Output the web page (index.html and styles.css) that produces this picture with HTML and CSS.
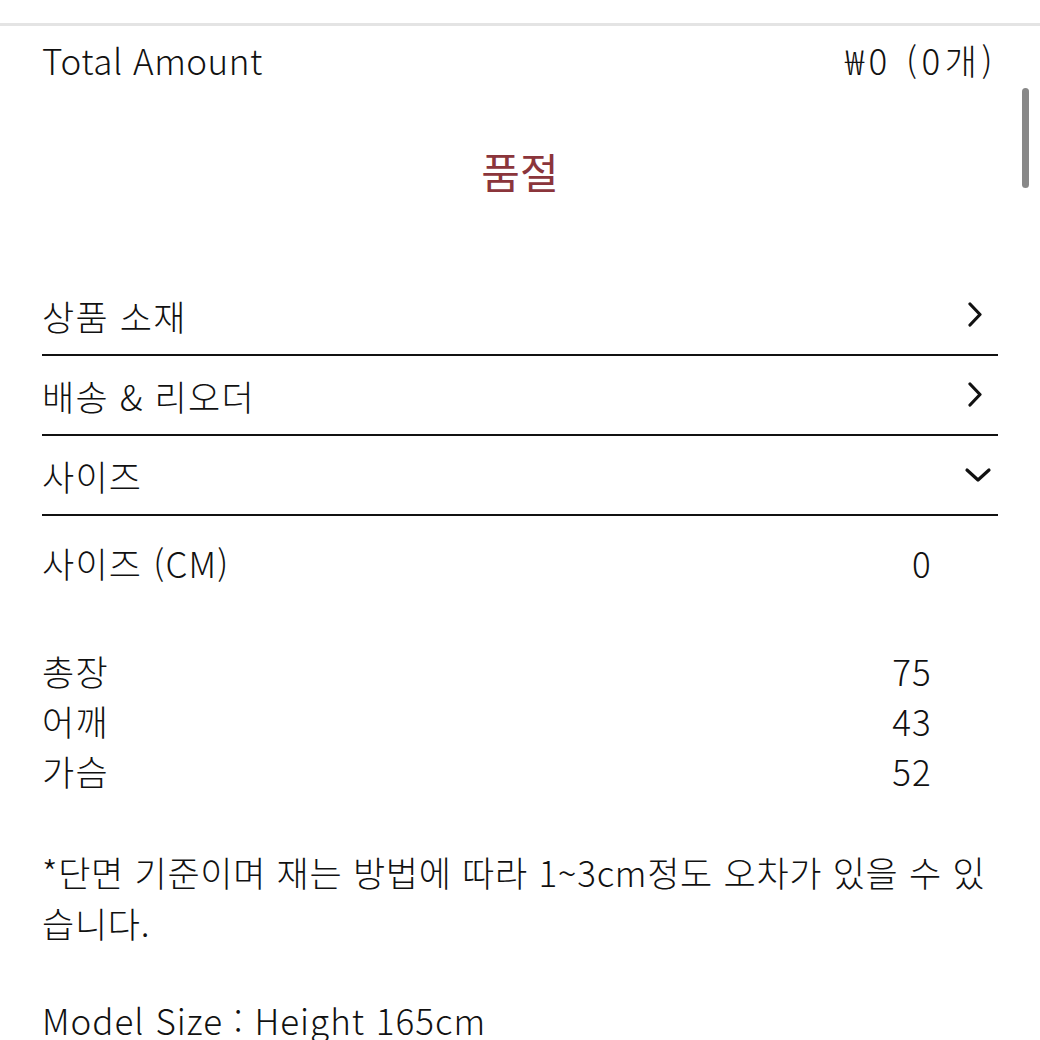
FILE: index.html
```html
<!DOCTYPE html>
<html lang="ko">
<head>
    <meta charset="UTF-8">
    <meta name="viewport" content="width=device-width, initial-scale=1.0">
    <title>상품 정보</title>
    <link rel="stylesheet" href="styles.css">
</head>
<body>
    <div class="total">
        <span class="latin">Total Amount</span>
        <span class="price">₩0 (0개)</span>
    </div>

    <div class="soldout">품절</div>

    <div class="accordion">
        <div class="acc-row">
            <span>상품 소재</span>
            <svg class="chev" width="24" height="26" viewBox="0 0 24 26"><path d="M8 2 L18 12.5 L8 23" fill="none" stroke="#111" stroke-width="3.2" stroke-linecap="round" stroke-linejoin="round"/></svg>
        </div>
        <div class="acc-row">
            <span>배송 &amp; 리오더</span>
            <svg class="chev" width="24" height="26" viewBox="0 0 24 26"><path d="M8 2 L18 12.5 L8 23" fill="none" stroke="#111" stroke-width="3.2" stroke-linecap="round" stroke-linejoin="round"/></svg>
        </div>
        <div class="acc-row">
            <span>사이즈</span>
            <svg class="chev down" width="28" height="20" viewBox="0 0 28 20"><path d="M3 5 L14 15 L25 5" fill="none" stroke="#111" stroke-width="3.2" stroke-linecap="round" stroke-linejoin="round"/></svg>
        </div>
    </div>

    <div class="sizes">
        <div class="size-head">
            <span>사이즈 (CM)</span>
            <span>0</span>
        </div>
        <div class="size-list">
            <div class="size-row"><span>총장</span><span>75</span></div>
            <div class="size-row"><span>어깨</span><span>43</span></div>
            <div class="size-row"><span>가슴</span><span>52</span></div>
        </div>
    </div>

    <p class="note">*단면 기준이며 재는 방법에 따라 1~3cm정도 오차가 있을 수 있습니다.</p>
    <p class="model latin">Model Size : Height 165cm</p>

    <div class="scrollbar"></div>
</body>
</html>
```

FILE: styles.css
```css
body {
    margin: 0;
    padding-top: 23px;
    font-family: "Noto Sans CJK KR", "Noto Sans", sans-serif;
    font-size: 35px;
    font-weight: 300;
    letter-spacing: 1.2px;
    color: #111;
    background: #fff;
    overflow: hidden;
}
.latin {
    letter-spacing: 0.5px;
}
.model {
    letter-spacing: 1px;
}
.price {
    letter-spacing: 4.5px;
}
.total {
    display: flex;
    justify-content: space-between;
    border-top: 3px solid #e4e4e4;
    padding: 12px 43px 0 42px;
    line-height: 44px;
}
.soldout {
    margin-top: 59px;
    text-align: center;
    font-size: 42px;
    line-height: 60px;
    font-weight: 400;
    letter-spacing: 0;
    color: #8b353b;
}
.accordion {
    margin: 75px 42px 0 42px;
}
.acc-row {
    display: flex;
    justify-content: space-between;
    align-items: center;
    height: 78px;
    border-bottom: 2px solid #111;
}
.chev {
    margin-right: 12px;
}
.chev.down {
    margin-right: 6px;
}
.sizes {
    margin: 22px 108px 0 42px;
}
.size-head,
.size-row {
    display: flex;
    justify-content: space-between;
    line-height: 50px;
}
.size-list {
    margin-top: 58px;
}
.note {
    margin: 50px 42px 0 42px;
    line-height: 51px;
    letter-spacing: 0.7px;
}
.model {
    margin: 46px 42px 0 42px;
    line-height: 51px;
}
.scrollbar {
    position: absolute;
    top: 88px;
    left: 1022px;
    width: 7px;
    height: 100px;
    border-radius: 4px;
    background: #888;
}
```
